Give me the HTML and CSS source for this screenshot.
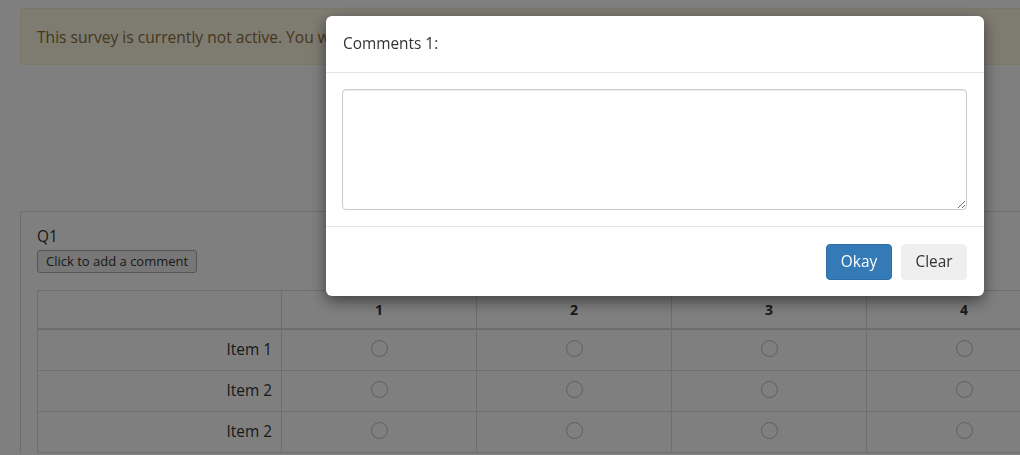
FILE: index.html
```html
<!DOCTYPE html>
<html>
<head>
<meta charset="utf-8">
<link rel="stylesheet" href="styles.css">
</head>
<body>
<div class="page">
  <div class="alert">This survey is currently not active. You will not be able to save your responses.</div>
  <div class="panel">
    <div class="q-title">Q1</div>
    <button class="comment-btn">Click to add a comment</button>
    <table class="grid">
      <colgroup>
        <col class="col-label"><col class="col-opt"><col class="col-opt"><col class="col-opt"><col class="col-opt">
      </colgroup>
      <thead>
        <tr><th></th><th>1</th><th>2</th><th>3</th><th>4</th></tr>
      </thead>
      <tbody>
        <tr><td class="label">Item 1</td><td><span class="radio"></span></td><td><span class="radio"></span></td><td><span class="radio"></span></td><td><span class="radio"></span></td></tr>
        <tr><td class="label">Item 2</td><td><span class="radio"></span></td><td><span class="radio"></span></td><td><span class="radio"></span></td><td><span class="radio"></span></td></tr>
        <tr><td class="label">Item 2</td><td><span class="radio"></span></td><td><span class="radio"></span></td><td><span class="radio"></span></td><td><span class="radio"></span></td></tr>
      </tbody>
    </table>
  </div>
</div>
<div class="backdrop"></div>
<div class="modal">
  <div class="modal-header">Comments 1:</div>
  <div class="modal-body"><textarea class="comment-box"></textarea></div>
  <div class="modal-footer">
    <button class="btn btn-primary">Okay</button>
    <button class="btn btn-default">Clear</button>
  </div>
</div>
</body>
</html>
```

FILE: styles.css
```css
html, body {
  margin: 0;
  padding: 0;
  overflow: hidden;
  background: #fff;
}
body {
  font-family: "Open Sans", "Liberation Sans", sans-serif;
  font-size: 15.4px;
  line-height: 20px;
  color: #333;
  width: 1020px;
  height: 455px;
}
.page {
  width: 1120px;
  padding: 8px 20px 0 20px;
}
.alert {
  background: #fcf8e3;
  border: 1px solid #faebcc;
  border-radius: 4px;
  color: #8a6d3b;
  padding: 18px 16px 17px 16px;
  font-size: 15.6px;
  line-height: 20px;
  margin-bottom: 146px;
}
.panel {
  border: 1px solid #ddd;
  border-bottom: none;
  padding: 15px 16px 0 16px;
}
.q-title {
  line-height: 20px;
}
.comment-btn {
  font-family: "Open Sans", "Liberation Sans", sans-serif;
  font-size: 13px;
  line-height: 17px;
  color: #333;
  background: #efefef;
  border: 1px solid #aaa;
  border-radius: 3px;
  padding: 2px 8px;
  margin: 3px 0 17px 0;
  display: block;
  height: 23px;
}
.grid {
  border-collapse: collapse;
  table-layout: fixed;
  width: 1024px;
}
.col-label { width: 244px; }
.col-opt { width: 195px; }
.grid th, .grid td {
  border: 1px solid #ddd;
  padding: 0 8px;
  text-align: center;
  vertical-align: middle;
}
.grid th {
  font-weight: bold;
  font-size: 14px;
  border-bottom: 2px solid #ddd;
  vertical-align: bottom;
  padding-bottom: 8px;
  height: 29px;
}
.grid td {
  height: 40px;
  padding-top: 0;
  padding-bottom: 0;
}
.grid td.label {
  text-align: right;
  padding-right: 9px;
}
.radio {
  display: block;
  width: 15px;
  height: 15px;
  border: 1px solid #bbb;
  border-radius: 50%;
  margin: 0 auto 4px auto;
}
.backdrop {
  position: fixed;
  inset: 0;
  background: rgba(0, 0, 0, 0.5);
}
.modal {
  position: fixed;
  left: 326px;
  top: 16px;
  width: 658px;
  background: #fff;
  border-radius: 6px;
  box-shadow: 0 5px 15px rgba(0, 0, 0, 0.5);
}
.modal-header {
  padding: 18px 17px 18px 17px;
  border-bottom: 1px solid #e5e5e5;
  line-height: 20px;
}
.modal-body {
  padding: 16px 16px 16px 16px;
}
.comment-box {
  display: block;
  box-sizing: border-box;
  width: 625px;
  height: 121px;
  border: 1px solid #ccc;
  border-radius: 4px;
  box-shadow: inset 0 1px 1px rgba(0, 0, 0, 0.075);
  resize: vertical;
  margin: 0;
}
.modal-footer {
  border-top: 1px solid #e5e5e5;
  padding: 17px 17px 16px 17px;
  display: flex;
  justify-content: flex-end;
  gap: 9px;
}
.btn {
  font-family: "Open Sans", "Liberation Sans", sans-serif;
  font-size: 15.4px;
  height: 36px;
  border-radius: 4px;
  padding: 0 0 2px 0;
  border: 1px solid transparent;
}
.btn-primary {
  background: #337ab7;
  border-color: #2e6da4;
  color: #fff;
  width: 66px;
}
.btn-default {
  background: #efefef;
  border-color: #efefef;
  color: #333;
  width: 66px;
}
```
